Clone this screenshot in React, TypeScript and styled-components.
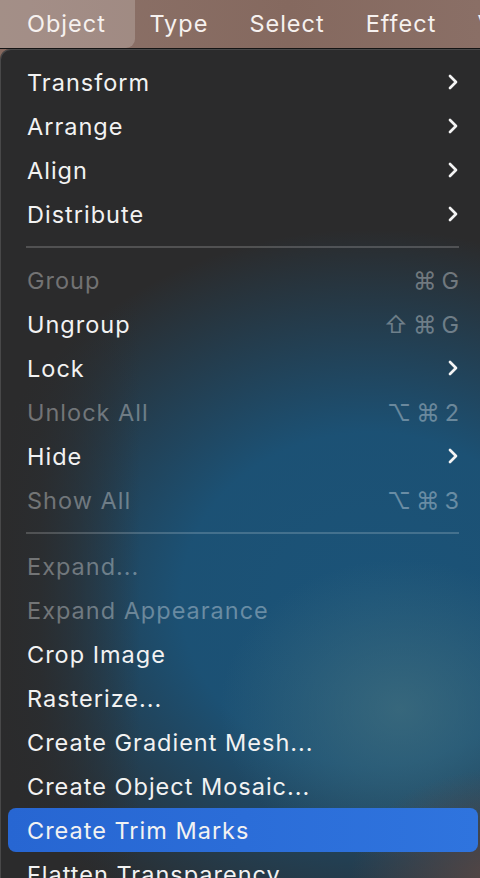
import React from "react";
import styled, { createGlobalStyle } from "styled-components";

const GlobalStyle = createGlobalStyle`
	html, body {
		margin: 0;
		padding: 0;
		background: #2b2b2b;
		overflow: hidden;
	}
	body {
		font-family: Inter, "Noto Sans", "DejaVu Sans", sans-serif;
		-webkit-font-smoothing: antialiased;
	}
`;

type Item =
	| { kind: "sep" }
	| { kind: "item"; label: string; disabled?: boolean; sub?: boolean; keys?: string[]; active?: boolean };

const items: Item[] = [
	{ kind: "item", label: "Transform", sub: true },
	{ kind: "item", label: "Arrange", sub: true },
	{ kind: "item", label: "Align", sub: true },
	{ kind: "item", label: "Distribute", sub: true },
	{ kind: "sep" },
	{ kind: "item", label: "Group", disabled: true, keys: ["⌘", "G"] },
	{ kind: "item", label: "Ungroup", keys: ["⇧", "⌘", "G"] },
	{ kind: "item", label: "Lock", sub: true },
	{ kind: "item", label: "Unlock All", disabled: true, keys: ["⌥", "⌘", "2"] },
	{ kind: "item", label: "Hide", sub: true },
	{ kind: "item", label: "Show All", disabled: true, keys: ["⌥", "⌘", "3"] },
	{ kind: "sep" },
	{ kind: "item", label: "Expand...", disabled: true },
	{ kind: "item", label: "Expand Appearance", disabled: true },
	{ kind: "item", label: "Crop Image" },
	{ kind: "item", label: "Rasterize..." },
	{ kind: "item", label: "Create Gradient Mesh..." },
	{ kind: "item", label: "Create Object Mosaic..." },
	{ kind: "item", label: "Create Trim Marks", active: true },
	{ kind: "item", label: "Flatten Transparency..." },
];

const Chevron = () => (
	<svg width="12" height="18" viewBox="0 0 12 18" fill="none">
		<polyline points="3,3 9,9 3,15" stroke="#f4f4f4" strokeWidth="2.7" strokeLinecap="round" strokeLinejoin="round" />
	</svg>
);

export default function App() {
	return (
		<>
			<GlobalStyle />
			<Screen>
				<MenuBar>
					<BarItem $active>Object</BarItem>
					<BarItem>Type</BarItem>
					<BarItem>Select</BarItem>
					<BarItem>Effect</BarItem>
					<BarItem>View</BarItem>
				</MenuBar>
				<Panel>
					{items.map((it, i) =>
						it.kind === "sep" ? (
							<Separator key={i} />
						) : (
							<Row key={i} $active={it.active}>
								<Label $disabled={it.disabled}>{it.label}</Label>
								{it.sub && <Chevron />}
								{it.keys && (
									<Keys>
										{it.keys.map((k, j) => (
											<KeyGlyph key={j}>{k}</KeyGlyph>
										))}
									</Keys>
								)}
							</Row>
						)
					)}
				</Panel>
			</Screen>
		</>
	);
}

// style 영역
const Screen = styled.div`
	width: 480px;
	height: 878px;
	overflow: hidden;
	display: flex;
	flex-direction: column;
	background: #86695f;
`;

const MenuBar = styled.div`
	height: 48px;
	flex-shrink: 0;
	display: flex;
	align-items: stretch;
	background: linear-gradient(90deg, #8d736a 0%, #85695f 60%, #8a6f66 100%);
	border-bottom: 1px solid #141414;
	white-space: nowrap;
`;

const BarItem = styled.div<{ $active?: boolean }>`
	display: flex;
	align-items: center;
	padding: ${({ $active }) => ($active ? "0 29px 0 27px" : "0 20.5px")};
	margin-right: ${({ $active }) => ($active ? "-6px" : "0")};
	padding-bottom: 1px;
	font-size: 23.5px;
	font-weight: 400;
	letter-spacing: 1px;
	color: #f6f1ef;
	border-radius: 0 0 9px 0;
	background: ${({ $active }) => ($active ? "rgba(255, 255, 255, 0.2)" : "transparent")};
`;

const Panel = styled.div`
	flex: 1;
	display: flex;
	flex-direction: column;
	padding: 11px 2px 0 8px;
	border-radius: 10px 0 0 0;
	box-shadow: inset 1px 1px 0 rgba(255, 255, 255, 0.14);
	background:
		linear-gradient(90deg, rgba(43, 43, 44, 1) 0px, rgba(43, 43, 44, 0.85) 40px, rgba(43, 43, 44, 0) 140px),
		radial-gradient(ellipse 150px 110px at 500px 830px, rgba(92, 72, 68, 0.9), rgba(92, 72, 68, 0) 100%),
		radial-gradient(ellipse 180px 150px at 400px 660px, rgba(64, 110, 126, 0.75), rgba(64, 110, 126, 0) 100%),
		radial-gradient(ellipse 420px 370px at 370px 550px, #1b5378 0%, rgba(27, 83, 120, 0.95) 45%, rgba(27, 83, 120, 0) 100%),
		#2b2b2c;
`;

const Row = styled.div<{ $active?: boolean }>`
	height: 44px;
	flex-shrink: 0;
	display: flex;
	align-items: center;
	justify-content: space-between;
	padding: 0 19px;
	border-radius: 8px;
	background: ${({ $active }) => ($active ? "linear-gradient(90deg, #2766d2, #2f74de)" : "transparent")};
`;

const Label = styled.span<{ $disabled?: boolean }>`
	font-size: 23.5px;
	letter-spacing: 1px;
	color: ${({ $disabled }) => ($disabled ? "rgba(255, 255, 255, 0.34)" : "#f2f2f2")};
	white-space: nowrap;
`;

const Keys = styled.span`
	display: flex;
	gap: 5px;
	color: rgba(255, 255, 255, 0.34);
	font-size: 23.5px;
`;

const KeyGlyph = styled.span`
	font-family: Inter, "DejaVu Sans", sans-serif;
`;

const Separator = styled.div`
	height: 2px;
	margin: 10px 19px 10px 18px;
	flex-shrink: 0;
	background: rgba(255, 255, 255, 0.18);
`;
